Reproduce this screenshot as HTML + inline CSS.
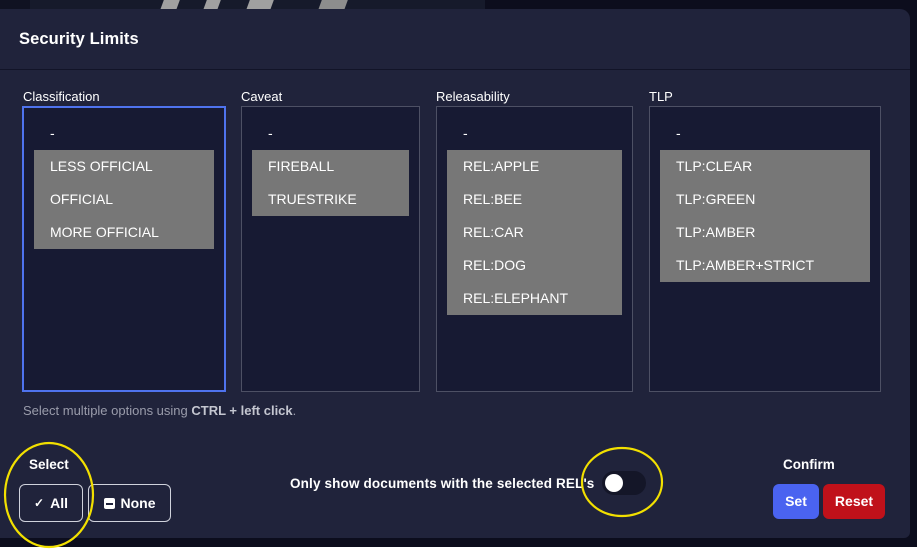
<!DOCTYPE html>
<html><head><meta charset="utf-8"><style>
*{box-sizing:border-box;margin:0;padding:0}
body{width:917px;height:549px;background:#0c0d1d;font-family:"Liberation Sans",sans-serif;position:relative;overflow:hidden}
.white{position:absolute;left:0;top:547px;width:917px;height:2px;background:#fff}
.top2{position:absolute;left:30px;top:0;width:455px;height:12px;background:#161a2b}
.top3{position:absolute;left:0;top:0;width:30px;height:12px;background:#101222}
.g{position:absolute;top:0;height:10px;background:#a0a0a0;transform:skewX(-20deg)}
.panel{position:absolute;left:0;top:9px;width:910px;height:529px;background:#20233b;border-radius:0 10px 6px 0}
.h{position:absolute;left:19px;top:30px;color:#fff;font-weight:bold;font-size:16.5px;letter-spacing:0.1px}
.div{position:absolute;left:0;top:69px;width:910px;height:1px;background:#121428}
.lbl{position:absolute;top:89px;color:#fff;font-size:13px}
.box{position:absolute;top:106px;height:286px;background:#171a33;border:1px solid #4d5064}
.box.sel{border:2px solid #4f73ee}
.dash{position:absolute;top:125px;color:#fff;font-size:14px}
.opts{position:absolute;top:150px;background:#777}
.opts div{height:33px;line-height:33px;color:#fff;font-size:14px;padding-left:16px}
.hint{position:absolute;left:23px;top:403px;color:#9a9cab;font-size:13px}
.hint b{color:#c4c6d0}
.t{position:absolute;color:#fff;font-size:13.5px;font-weight:bold}
.btn{position:absolute;top:484px;height:38px;border:1px solid #d0d2dc;border-radius:6px;color:#fff;font-weight:bold;font-size:14px;display:flex;align-items:center;justify-content:center;gap:6px}
.tog{position:absolute;left:602px;top:471px;width:44px;height:24px;border-radius:12px;background:#141628}
.tog i{position:absolute;left:3px;top:3px;width:18px;height:18px;border-radius:50%;background:#fff}
.b2{position:absolute;top:484px;height:35px;border-radius:6px;color:#fff;font-weight:bold;font-size:14px;line-height:35px;text-align:center}
</style></head><body>
<div class="top3"></div><div class="top2"></div>
<div class="g" style="left:162px;width:16px"></div>
<div class="g" style="left:205px;width:14px"></div>
<div class="g" style="left:248px;width:24px"></div>
<div class="g" style="left:320px;width:26px;background:#8d8d8d"></div>
<div class="white"></div>
<div class="panel"></div>
<div class="h">Security Limits</div>
<div class="div"></div>

<div class="lbl" style="left:23px">Classification</div>
<div class="lbl" style="left:241px">Caveat</div>
<div class="lbl" style="left:436px">Releasability</div>
<div class="lbl" style="left:649px">TLP</div>

<div class="box sel" style="left:22px;width:204px"></div>
<div class="box" style="left:241px;width:179px"></div>
<div class="box" style="left:436px;width:197px"></div>
<div class="box" style="left:649px;width:232px"></div>

<div class="dash" style="left:50px">-</div>
<div class="dash" style="left:268px">-</div>
<div class="dash" style="left:463px">-</div>
<div class="dash" style="left:676px">-</div>

<div class="opts" style="left:34px;width:180px"><div>LESS OFFICIAL</div><div>OFFICIAL</div><div>MORE OFFICIAL</div></div>
<div class="opts" style="left:252px;width:157px"><div>FIREBALL</div><div>TRUESTRIKE</div></div>
<div class="opts" style="left:447px;width:175px"><div>REL:APPLE</div><div>REL:BEE</div><div>REL:CAR</div><div>REL:DOG</div><div>REL:ELEPHANT</div></div>
<div class="opts" style="left:660px;width:210px"><div>TLP:CLEAR</div><div>TLP:GREEN</div><div>TLP:AMBER</div><div>TLP:AMBER+STRICT</div></div>

<div class="hint">Select multiple options using <b>CTRL + left click</b>.</div>

<div class="t" style="left:29px;top:457px">Select</div>
<div class="btn" style="left:19px;width:64px"><span style="font-size:12px">✓</span>All</div>
<div class="btn" style="left:88px;width:83px"><span style="display:inline-block;width:11px;height:11px;background:#fff;border-radius:2px;position:relative"><span style="position:absolute;left:2px;top:5px;width:7px;height:2px;background:#20233b"></span></span>None</div>

<div class="t" style="left:290px;top:476px;letter-spacing:0.15px">Only show documents with the selected REL's</div>
<div class="tog"><i></i></div>

<div class="t" style="left:783px;top:457px">Confirm</div>
<div class="b2" style="left:773px;width:46px;background:#4a63f0">Set</div>
<div class="b2" style="left:823px;width:62px;background:#c0111a">Reset</div>

<svg style="position:absolute;left:0;top:0" width="917" height="549">
<ellipse cx="49" cy="495" rx="44" ry="52" fill="none" stroke="#f2e000" stroke-width="2.2"/>
<ellipse cx="622" cy="482" rx="40" ry="34" fill="none" stroke="#f2e000" stroke-width="2.2"/>
</svg>
</body></html>
